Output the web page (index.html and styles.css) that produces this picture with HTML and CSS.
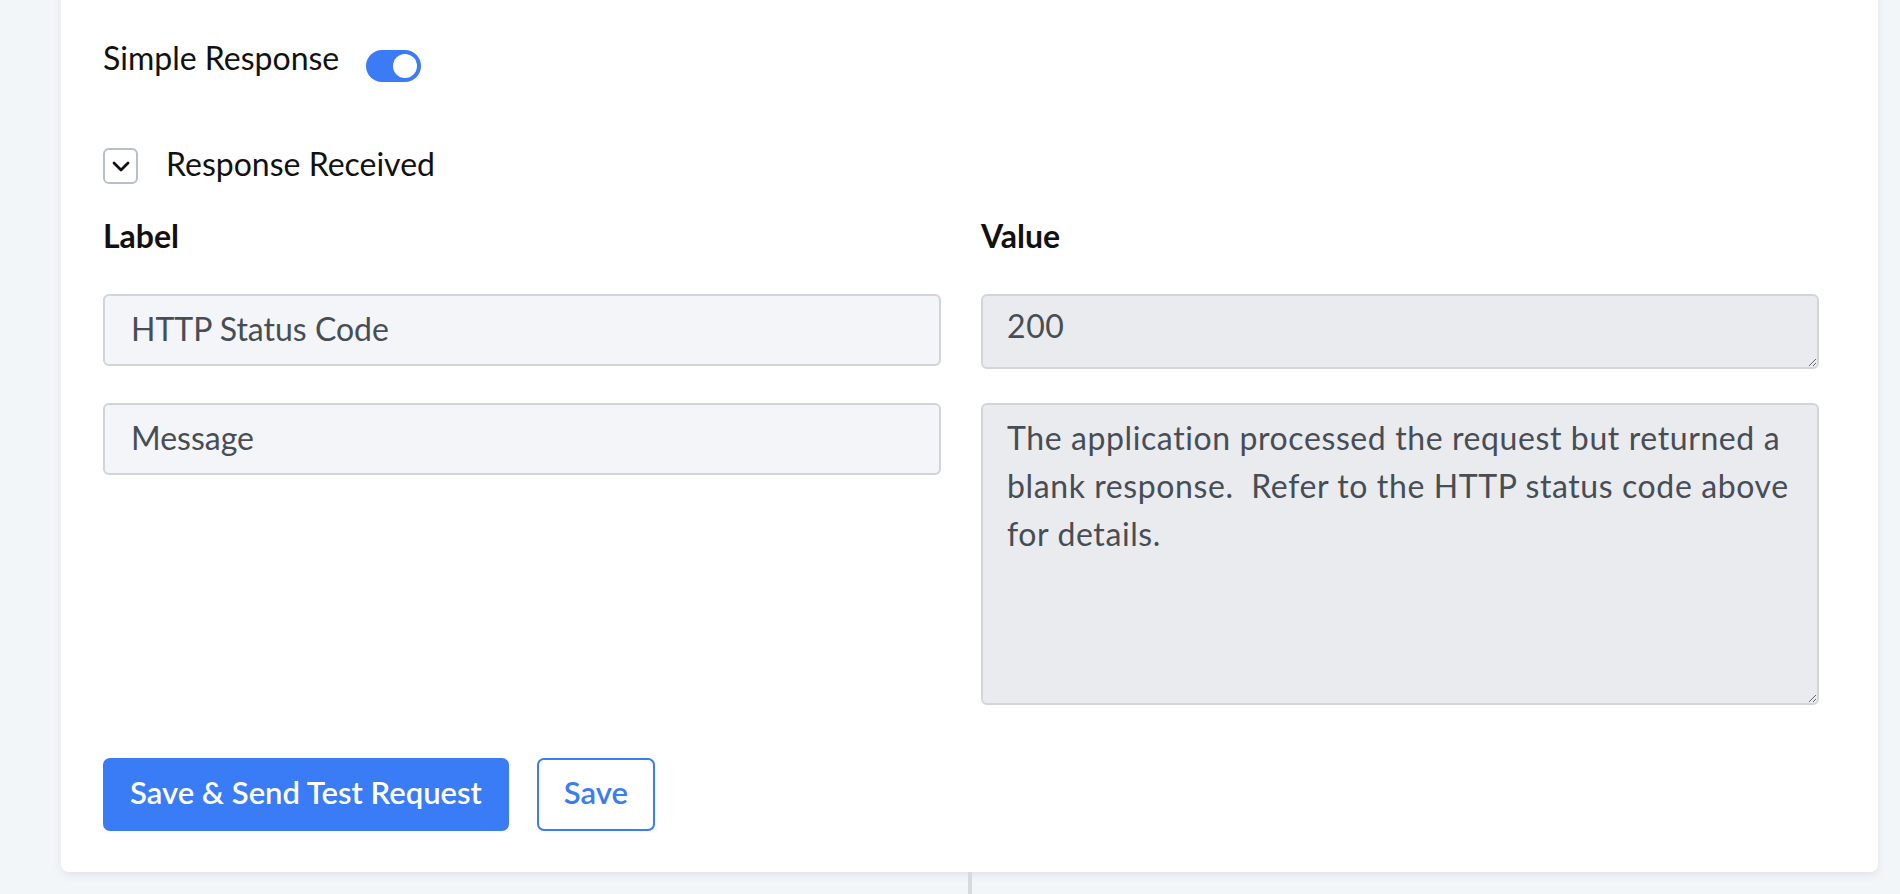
FILE: index.html
```html
<!DOCTYPE html>
<html lang="en">
<head>
    <meta charset="UTF-8">
    <meta name="viewport" content="width=device-width, initial-scale=1.0">
    <title>Webhook Step - Response</title>
    <link rel="stylesheet" href="styles.css">
</head>
<body>
    <div class="page">
        <section class="card">
            <div class="switch-row">
                <span class="switch-label">Simple Response</span>
                <span class="toggle on" role="switch" aria-checked="true"><span class="knob"></span></span>
            </div>

            <div class="section-head">
                <button class="collapse-btn" type="button" aria-label="Collapse">
                    <svg width="18" height="11" viewBox="0 0 18 11" fill="none">
                        <polyline points="2,2 9,9 16,2" stroke="#111" stroke-width="2.8" stroke-linecap="round" stroke-linejoin="round"/>
                    </svg>
                </button>
                <span class="section-title">Response Received</span>
            </div>

            <div class="fields">
                <div class="col-title">Label</div>
                <div class="col-title">Value</div>

                <input class="label-input" type="text" value="HTTP Status Code" readonly>
                <textarea class="value-box short" readonly>200</textarea>

                <input class="label-input" type="text" value="Message" readonly>
                <textarea class="value-box tall" readonly>The application processed the request but returned a blank response.  Refer to the HTTP status code above for details.</textarea>
            </div>

            <div class="actions">
                <button class="btn btn-primary" type="button">Save &amp; Send Test Request</button>
                <button class="btn btn-outline" type="button">Save</button>
            </div>
        </section>
        <div class="connector"></div>
    </div>
</body>
</html>
```

FILE: styles.css
```css
html, body {
    height: 100%;
}
body {
    margin: 0;
    overflow: hidden;
    background-color: #f3f6f9;
    font-family: Lato, "Open Sans", sans-serif;
    color: #111;
}
.page {
    display: flex;
    flex-direction: column;
    align-items: center;
    height: 100%;
    padding: 0 22px 0 61px;
}
.card {
    align-self: stretch;
    margin-top: -24px;
    padding: 58px 59px 41px 42px;
    background-color: #fff;
    border-radius: 8px;
    box-shadow: 0 3px 8px rgba(30, 45, 70, 0.09);
}
.connector {
    flex: 1;
    width: 4px;
    background-color: #d6dade;
}

/* top toggle */
.switch-row {
    display: flex;
    align-items: flex-start;
    font-size: 32px;
    line-height: 48px;
}
.toggle {
    position: relative;
    width: 55px;
    height: 32px;
    margin: 16px 0 0 27px;
    border-radius: 16px;
    background-color: #3b7cf6;
}
.toggle .knob {
    position: absolute;
    top: 4px;
    right: 4px;
    width: 24px;
    height: 24px;
    border-radius: 50%;
    background-color: #fff;
}

/* collapsible header */
.section-head {
    display: flex;
    align-items: flex-start;
    margin-top: 58px;
    font-size: 32px;
    line-height: 48px;
}
.collapse-btn {
    display: flex;
    align-items: center;
    justify-content: center;
    width: 35px;
    height: 36px;
    margin: 8px 28px 0 0;
    padding: 0;
    border: 2px solid #b9bfc7;
    border-radius: 6px;
    background: #fff;
}

/* label / value grid */
.fields {
    display: grid;
    grid-template-columns: 1fr 1fr;
    column-gap: 40px;
    row-gap: 34px;
    align-items: start;
    margin-top: 24px;
}
.col-title {
    font-size: 32px;
    line-height: 48px;
    font-weight: 700;
}
.label-input,
.value-box {
    box-sizing: border-box;
    width: 100%;
    margin: 0;
    font-family: inherit;
    font-size: 32px;
    color: #474d55;
    border-radius: 6px;
    outline: none;
}
.label-input {
    height: 72px;
    padding: 0 26px 4px;
    border: 2px solid #d0d5db;
    background-color: #f3f5f8;
}
.value-box {
    display: block;
    padding: 7px 24px;
    line-height: 48px;
    letter-spacing: 0.6px;
    border: 2px solid #d2d6db;
    background-color: #e9ebee;
    resize: vertical;
}
.value-box.short {
    height: 75px;
    padding-top: 6px;
}
.value-box.tall {
    height: 302px;
    padding-top: 9px;
}

/* buttons */
.actions {
    display: flex;
    gap: 28px;
    margin-top: 53px;
}
.btn {
    height: 73px;
    padding: 0 25px 5px;
    font-family: inherit;
    font-size: 31px;
    font-weight: 600;
    border-radius: 7px;
    cursor: pointer;
}
.btn-primary {
    border: 2px solid #3a7bf6;
    background-color: #3a7bf6;
    color: #fff;
}
.btn-outline {
    border: 2px solid #3a7bf6;
    background-color: #fff;
    color: #3a7bf6;
}
```
